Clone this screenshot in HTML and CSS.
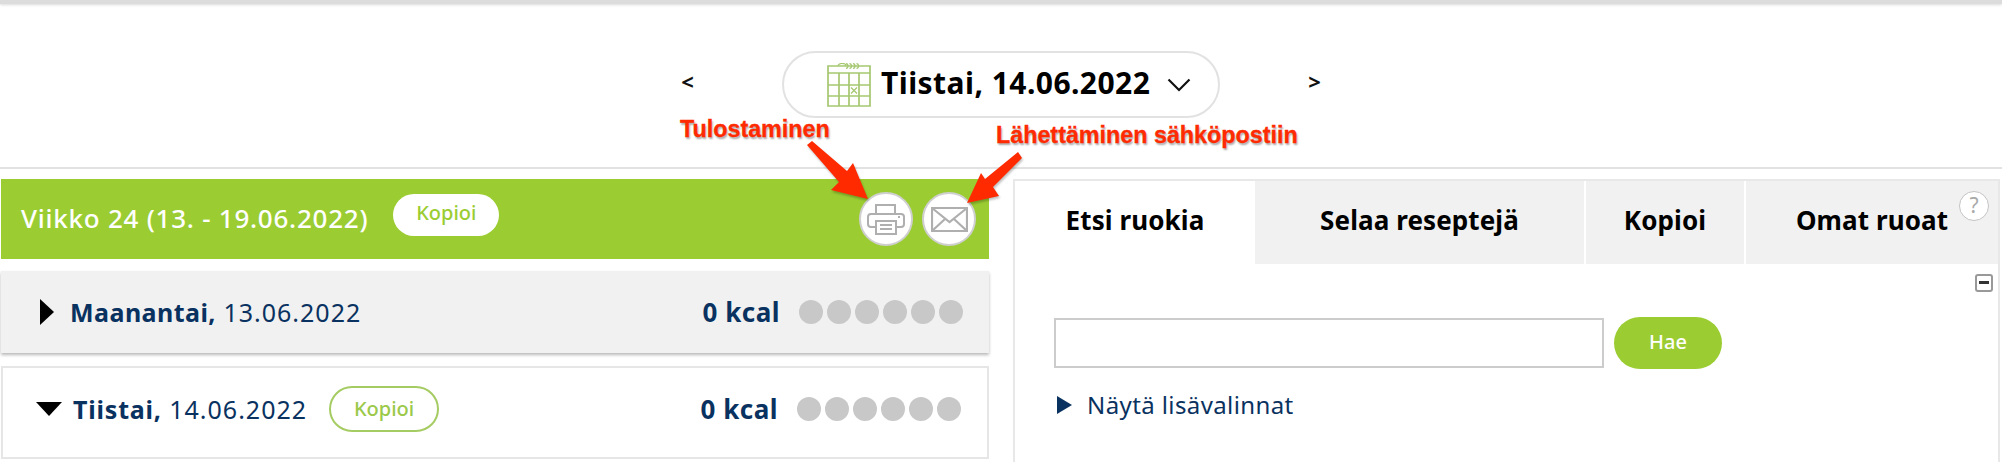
FILE: index.html
```html
<!DOCTYPE html>
<html lang="en">
  <head>
    <meta charset="UTF-8" />
    <title>Päiväkirja</title>
    <link rel="stylesheet" href="styles.css">
  </head>
  <body>
    <div class="top-bar"></div>

    <div class="date-nav">
      <span class="nav-arrow">&lt;</span>
      <div class="date-pill">
        <svg class="calendar-icon" width="44" height="44" viewBox="0 0 44 44" fill="none" stroke="#a5c770" stroke-width="1.7">
          <path d="M1 3h42v40H1zM1 10h42M1 22h42M1 33h42M12 10v33M22 10v33M32 10v33" />
          <path d="M11 3a4 2.500 0 0 1 8 0M19 .7a2 2.300 0 0 1 0 4.600M22.500 .7a2 2.300 0 0 1 0 4.600M26 .7a2 2.300 0 0 1 0 4.600M29.500 .7a2 2.300 0 0 1 0 4.600" stroke-width="1.2" />
          <path d="M24 24.500l6 6M30 24.500l-6 6" stroke-width="1.3" />
        </svg>
        <span class="date-text">Tiistai, 14.06.2022</span>
        <svg class="chevron" width="24" height="14" viewBox="0 0 24 14" fill="none" stroke="#111" stroke-width="2.2">
          <path d="M1.5 1.5L12 12L22.5 1.5" />
        </svg>
      </div>
      <span class="nav-arrow">&gt;</span>
    </div>

    <div class="divider"></div>

    <div class="main">
      <div class="left-col">
        <div class="week-bar">
          <span class="week-title">Viikko 24 (13. - 19.06.2022)</span>
          <span class="btn-white">Kopioi</span>
          <div class="week-actions">
            <span class="round-btn">
              <svg width="38" height="32" viewBox="0 0 38 32" fill="none" stroke="#afafaf" stroke-width="2">
                <path d="M9 11V2h19v9M9 24H4a3 3 0 0 1-3-3v-7a3 3 0 0 1 3-3h30a3 3 0 0 1 3 3v7a3 3 0 0 1-3 3h-5" />
                <path d="M9 18h20v13H9zM13 22h12M13 26h12" />
                <path d="M31 14h2" />
              </svg>
            </span>
            <span class="round-btn">
              <svg width="37" height="25" viewBox="0 0 37 25" fill="none" stroke="#afafaf" stroke-width="2.2">
                <path d="M1 1h35v23H1zM1 1l17.500 14L36 1M1 24l13-12M36 24L23 12" />
              </svg>
            </span>
          </div>
        </div>

        <div class="day-row day-closed">
          <span class="tri-right"></span>
          <span class="day-name"><b>Maanantai,</b> 13.06.2022</span>
          <span class="kcal">0 kcal</span>
          <div class="dots"><i></i><i></i><i></i><i></i><i></i><i></i></div>
        </div>

        <div class="day-row day-open">
          <span class="tri-down"></span>
          <span class="day-name"><b>Tiistai,</b> 14.06.2022</span>
          <span class="btn-outline">Kopioi</span>
          <span class="kcal">0 kcal</span>
          <div class="dots"><i></i><i></i><i></i><i></i><i></i><i></i></div>
        </div>
      </div>

      <div class="right-col">
        <div class="tabs">
          <div class="tab tab-active">Etsi ruokia</div>
          <div class="tab tab-recipes">Selaa reseptejä</div>
          <div class="tab tab-copy">Kopioi</div>
          <div class="tab tab-own">Omat ruoat</div>
          <span class="help">?</span>
        </div>
        <div class="panel">
          <div class="collapse-row"><span class="collapse"></span></div>
          <div class="search-row">
            <input class="search-input" type="text" />
            <span class="btn-search">Hae</span>
          </div>
          <div class="more-options"><span class="tri-small"></span>Näytä lisävalinnat</div>
        </div>
      </div>
    </div>

    <!-- Red annotations pasted on top of the screenshot -->
    <span class="note note-print">Tulostaminen</span>
    <span class="note note-mail">Lähettäminen sähköpostiin</span>
    <svg class="note-arrows" width="2002" height="462" viewBox="0 0 2002 462">
      <path d="M807 145L812 141L847 171L853 163L868 199L831 190L839 182Z" />
      <path d="M1022 158L1018 152L985 179L981 173L967 203L999 196L993 187Z" />
    </svg>
  </body>
</html>
```

FILE: styles.css
```css
:root {
  --green: #9bcd32;
  --navy: #0a3260;
  --line: #e2e2e2;
  --dot: #c8c8c8;
}

html,
body {
  height: 462px;
  overflow: hidden;
}

body {
  margin: 0;
  position: relative;
  background-color: white;
  color: #111;
  font-family: "Noto Sans", "DejaVu Sans", sans-serif;
}

.top-bar {
  height: 4px;
  background-color: #dcdcdc;
  box-shadow: 0 1px 3px rgba(0, 0, 0, 0.15);
}

.date-nav {
  display: flex;
  justify-content: center;
  align-items: center;
  gap: 88px;
  margin-top: 47px;
  height: 67px;
}

.nav-arrow {
  font-size: 22px;
  font-weight: 700;
  width: 13px;
  text-align: center;
  color: #111;
  padding-bottom: 7px;
}

.date-pill {
  box-sizing: border-box;
  width: 438px;
  height: 67px;
  border: 2px solid var(--line);
  border-radius: 34px;
  display: flex;
  align-items: center;
  padding-left: 43px;
}

.date-text {
  font-size: 30px;
  font-weight: 700;
  letter-spacing: 0.45px;
  color: #000;
  margin-left: 10px;
  padding-bottom: 4px;
  white-space: nowrap;
}

.chevron {
  margin-left: 17px;
}

.divider {
  height: 2px;
  background-color: var(--line);
  margin-top: 49px;
}

.main {
  display: grid;
  grid-template-columns: 988px 987px;
  column-gap: 24px;
  margin: 10px 2px 0 1px;
}

.week-bar {
  height: 80px;
  background-color: var(--green);
  display: flex;
  align-items: center;
  padding-left: 20px;
  color: white;
}

.week-title {
  font-size: 26px;
  font-weight: 500;
  letter-spacing: 0.75px;
  padding-bottom: 3px;
  white-space: nowrap;
}

.btn-white {
  background-color: white;
  color: var(--green);
  font-size: 20px;
  font-weight: 500;
  width: 106px;
  height: 42px;
  line-height: 38px;
  text-align: center;
  border-radius: 21px;
  margin-left: 25px;
  margin-top: -9px;
}

.week-actions {
  margin-left: auto;
  margin-right: 13px;
  display: flex;
  gap: 9px;
}

.round-btn {
  box-sizing: border-box;
  width: 54px;
  height: 54px;
  border-radius: 50%;
  background-color: white;
  border: 2px solid #cfcfcf;
  display: flex;
  align-items: center;
  justify-content: center;
}

.day-row {
  display: flex;
  align-items: center;
  box-sizing: border-box;
  color: var(--navy);
}

.day-closed {
  margin-top: 12px;
  height: 82px;
  background-color: #f1f1f1;
  box-shadow: 0 2px 3px rgba(0, 0, 0, 0.28);
  padding-left: 39px;
  padding-right: 26px;
}

.day-open {
  margin-top: 13px;
  height: 93px;
  border: 2px solid #e6e6e6;
  padding-left: 33px;
  padding-right: 26px;
  padding-bottom: 8px;
}

.tri-right {
  width: 0;
  height: 0;
  border-left: 14px solid black;
  border-top: 13px solid transparent;
  border-bottom: 13px solid transparent;
  margin-right: 16px;
}

.tri-down {
  width: 0;
  height: 0;
  border-top: 14px solid black;
  border-left: 13px solid transparent;
  border-right: 13px solid transparent;
  margin-right: 11px;
}

.day-name {
  font-size: 25px;
  letter-spacing: 1px;
  white-space: nowrap;
}

.day-name b {
  font-weight: 700;
  letter-spacing: 0.45px;
}

.day-open b {
  letter-spacing: 0.8px;
  margin-right: 0;
}

.btn-outline {
  box-sizing: border-box;
  width: 110px;
  height: 46px;
  line-height: 42px;
  text-align: center;
  border: 2px solid #a5cc63;
  border-radius: 23px;
  color: #9bc94a;
  font-size: 20px;
  font-weight: 500;
  margin-left: 22px;
}

.kcal {
  margin-left: auto;
  font-size: 26px;
  font-weight: 700;
  letter-spacing: 0.5px;
}

.dots {
  display: flex;
  gap: 4px;
  margin-left: 19px;
}

.dots i {
  width: 24px;
  height: 24px;
  border-radius: 50%;
  background-color: var(--dot);
}

.right-col {
  border: 2px solid #e8e8e8;
  border-bottom: none;
  height: 290px;
  box-sizing: border-box;
}

.tabs {
  display: flex;
  gap: 2px;
  height: 83px;
  position: relative;
}

.tab {
  background-color: #f1f1f1;
  font-size: 26px;
  font-weight: 700;
  letter-spacing: 0.1px;
  color: #000;
  display: flex;
  align-items: center;
  justify-content: center;
  padding-bottom: 6px;
  box-sizing: border-box;
}

.tab-active {
  background-color: white;
  width: 240px;
  margin-right: -2px;
}

.tab-recipes {
  width: 329px;
}

.tab-copy {
  width: 158px;
}

.tab-own {
  flex: 1;
}

.help {
  position: absolute;
  right: 9px;
  top: 10px;
  box-sizing: border-box;
  width: 30px;
  height: 30px;
  border: 1.5px solid #c4c4c4;
  border-radius: 50%;
  background-color: white;
  color: #aaa;
  font-size: 21px;
  line-height: 26px;
  text-align: center;
}

.panel {
  padding: 0 5px 0 39px;
}

.collapse-row {
  display: flex;
  justify-content: flex-end;
  padding-top: 10px;
}

.collapse {
  box-sizing: border-box;
  width: 18px;
  height: 18px;
  border: 2px solid #999;
  border-radius: 3px;
  position: relative;
}

.collapse::after {
  content: "";
  position: absolute;
  left: 2px;
  right: 2px;
  top: 5px;
  height: 3px;
  background-color: #333;
}

.search-row {
  display: flex;
  align-items: center;
  gap: 10px;
  margin-top: 25px;
}

.search-input {
  box-sizing: border-box;
  width: 550px;
  height: 50px;
  border: 2px solid #ccc;
  margin: 0;
  padding: 0 8px;
}

.btn-search {
  width: 108px;
  height: 52px;
  line-height: 50px;
  text-align: center;
  border-radius: 26px;
  background-color: var(--green);
  color: white;
  font-size: 20px;
  font-weight: 500;
}

.more-options {
  display: flex;
  align-items: center;
  margin-top: 19px;
  margin-left: 3px;
  font-size: 24px;
  letter-spacing: 0.4px;
  color: var(--navy);
}

.tri-small {
  width: 0;
  height: 0;
  border-left: 15px solid var(--navy);
  border-top: 9px solid transparent;
  border-bottom: 9px solid transparent;
  margin-right: 15px;
}

.note {
  position: absolute;
  font-family: "Liberation Sans", Arial, sans-serif;
  font-weight: 700;
  font-size: 23.3px;
  color: #ff2a00;
  -webkit-text-stroke: 0.3px #ff2a00;
  text-shadow: 1px 2px 2px rgba(0, 0, 0, 0.35);
  white-space: nowrap;
}

.note-print {
  left: 680px;
  top: 116px;
}

.note-mail {
  left: 996px;
  top: 122px;
}

.note-arrows {
  position: absolute;
  left: 0;
  top: 0;
  pointer-events: none;
  fill: #ff2a00;
  filter: drop-shadow(1px 2px 1px rgba(0, 0, 0, 0.25));
}
```
